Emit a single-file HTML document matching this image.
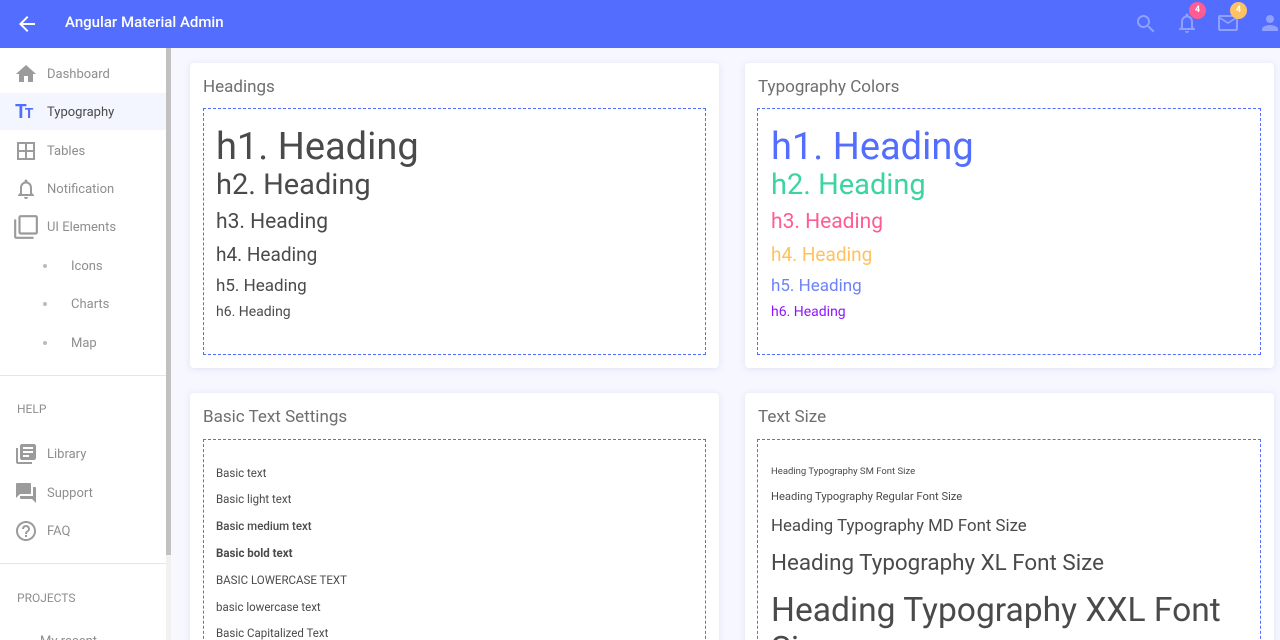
<!DOCTYPE html>
<html style="width:1280px;height:640px;overflow:hidden"><head><meta charset="utf-8"><style>
*{margin:0;padding:0;box-sizing:border-box}
body{width:1280px;height:640px;overflow:hidden;background:#f6f7ff;font-family:"Roboto","Liberation Sans",sans-serif;color:#4a4a4a;position:relative}
.a{position:absolute;white-space:nowrap;line-height:1}
header{position:absolute;left:0;top:0;width:1280px;height:48px;background:#536dfe}
.side{position:absolute;left:0;top:48px;width:166px;height:592px;background:#fff}
.sb{position:absolute;left:166px;top:48px;width:5px;height:507px;background:#c1c1c1}
.sbt{position:absolute;left:166px;top:555px;width:5px;height:85px;background:#f1f1f1}
.card{position:absolute;background:#fff;border-radius:4px;box-shadow:0 1px 6px rgba(200,205,230,.5)}
.box{position:absolute;border:1px dashed #536dfe}
.nav{font-size:13px;color:#8e8e8e}
.ct{font-size:17px;color:#6e6e6e}
.bt{font-size:11.5px;color:#4a4a4a}
.badge{position:absolute;width:17px;height:17px;border-radius:50%;color:#fff;font-size:9px;font-weight:bold;text-align:center;line-height:17px}
</style></head><body>
<header>
<svg class="a" style="left:15px;top:12px" width="24" height="24" viewBox="0 0 24 24"><path d="M20 11H7.83l5.59-5.59L12 4l-8 8 8 8 1.41-1.41L7.83 13H20v-2z" fill="#fff"/></svg>
<div class="a" style="left:65px;top:15px;font-size:15px;color:#fff;font-weight:500">Angular Material Admin</div>
<svg class="a" style="left:1134px;top:12px" width="24" height="24" viewBox="0 0 24 24"><path fill="#8fa0ff" d="M15.5 14h-.79l-.28-.27A6.47 6.47 0 0016 9.5 6.5 6.5 0 109.5 16c1.61 0 3.09-.59 4.23-1.57l.27.28v.79l5 4.99L20.49 19l-4.99-5zm-6 0C7.010 14 5 11.99 5 9.5S7.01 5 9.5 5 14 7.01 14 9.5 11.99 14 9.5 14z"/></svg>
<svg class="a" style="left:1175px;top:11px" width="24" height="24" viewBox="0 0 24 24"><path fill="#8fa0ff" d="M12 22c1.1 0 2-.9 2-2h-4c0 1.1.9 2 2 2zm6-6v-5c0-3.07-1.630-5.64-4.5-6.32V4c0-.83-.67-1.5-1.5-1.5s-1.5.67-1.5 1.5v.68C7.64 5.36 6 7.92 6 11v5l-2 2v1h16v-1l-2-2zm-2 1H8v-6c0-2.48 1.51-4.5 4-4.5s4 2.02 4 4.5v6z"/></svg>
<div class="badge" style="left:1189px;top:2px;background:#ff5c93">4</div>
<svg class="a" style="left:1216px;top:11px" width="24" height="24" viewBox="0 0 24 24"><path fill="#8fa0ff" d="M20 4H4c-1.1 0-2 .9-2 2v12c0 1.1.9 2 2 2h16c1.1 0 2-.9 2-2V6c0-1.1-.9-2-2-2zm0 14H4V8l8 5 8-5v10zm-8-7L4 6h16l-8 5z"/></svg>
<div class="badge" style="left:1230px;top:2px;background:#ffc260">4</div>
<svg class="a" style="left:1258px;top:11px" width="24" height="24" viewBox="0 0 24 24"><path fill="#8fa0ff" d="M12 12c2.21 0 4-1.79 4-4s-1.79-4-4-4-4 1.79-4 4 1.79 4 4 4zm0 2c-2.67 0-8 1.34-8 4v2h16v-2c0-2.66-5.33-4-8-4z"/></svg>
</header>
<div class="side">
<div style="position:absolute;left:0;top:45px;width:166px;height:37px;background:#f3f5ff"></div>
<div style="position:absolute;left:0;top:327px;width:166px;height:1px;background:#e6e6e6"></div>
<div style="position:absolute;left:0;top:515px;width:166px;height:1px;background:#e6e6e6"></div>
</div>
<div class="sb"></div><div class="sbt"></div>
<svg class="a" style="left:14px;top:62px" width="24" height="24" viewBox="0 0 24 24"><path fill="#9b9b9b" d="M10 20v-6h4v6h5v-8h3L12 3 2 12h3v8z"/></svg>
<div class="a nav" style="left:47px;top:68px">Dashboard</div>
<div class="a" style="left:15px;top:102px;font-size:19px;font-weight:bold;color:#536dfe;letter-spacing:-2px">T<span style="font-size:14px">T</span></div>
<div class="a nav" style="left:47px;top:106px;color:#4a4a4a">Typography</div>
<svg class="a" style="left:14px;top:139px" width="24" height="24" viewBox="0 0 24 24"><path fill="#9b9b9b" d="M3 3v18h18V3H3zm8 16H5v-6h6v6zm0-8H5V5h6v6zm8 8h-6v-6h6v6zm0-8h-6V5h6v6z"/></svg>
<div class="a nav" style="left:47px;top:145px">Tables</div>
<svg class="a" style="left:14px;top:177px" width="24" height="24" viewBox="0 0 24 24"><path fill="#9b9b9b" d="M12 22c1.1 0 2-.9 2-2h-4c0 1.1.9 2 2 2zm6-6v-5c0-3.07-1.63-5.64-4.5-6.32V4c0-.83-.67-1.5-1.5-1.5s-1.5.67-1.5 1.5v.68C7.64 5.36 6 7.92 6 11v5l-2 2v1h16v-1l-2-2zm-2 1H8v-6c0-2.48 1.51-4.5 4-4.5s4 2.02 4 4.5v6z"/></svg>
<div class="a nav" style="left:47px;top:183px">Notification</div>
<svg class="a" style="left:13px;top:214px" width="26" height="26" viewBox="0 0 24 24"><path fill="#9b9b9b" d="M3 5H1v16c0 1.1.9 2 2 2h16v-2H3V5zm18-4H7c-1.1 0-2 .9-2 2v14c0 1.1.9 2 2 2h14c1.1 0 2-.9 2-2V3c0-1.1-.9-2-2-2zm0 16H7V3h14v14z"/></svg>
<div class="a nav" style="left:47px;top:221px">UI Elements</div>
<div class="a" style="left:43px;top:264px;width:4px;height:4px;border-radius:50%;background:#bbb"></div>
<div class="a nav" style="left:71px;top:260px">Icons</div>
<div class="a" style="left:43px;top:302px;width:4px;height:4px;border-radius:50%;background:#bbb"></div>
<div class="a nav" style="left:71px;top:298px">Charts</div>
<div class="a" style="left:43px;top:341px;width:4px;height:4px;border-radius:50%;background:#bbb"></div>
<div class="a nav" style="left:71px;top:337px">Map</div>
<div class="a nav" style="left:17px;top:403px;font-size:12px">HELP</div>
<svg class="a" style="left:14px;top:442px" width="24" height="24" viewBox="0 0 24 24"><path fill="#9b9b9b" d="M4 6H2v14c0 1.1.9 2 2 2h14v-2H4V6zm16-4H8c-1.1 0-2 .9-2 2v12c0 1.1.9 2 2 2h12c1.1 0 2-.9 2-2V4c0-1.1-.9-2-2-2zm-1 9H9V9h10v2zm-4 4H9v-2h6v2zm4-8H9V5h10v2z"/></svg>
<div class="a nav" style="left:47px;top:448px">Library</div>
<svg class="a" style="left:14px;top:481px" width="24" height="24" viewBox="0 0 24 24"><path fill="#9b9b9b" d="M21 6h-2v9H6v2c0 .55.45 1 1 1h11l4 4V7c0-.55-.45-1-1-1zm-4 6V3c0-.55-.45-1-1-1H3c-.55 0-1 .45-1 1v14l4-4h10c.55 0 1-.45 1-1z"/></svg>
<div class="a nav" style="left:47px;top:487px">Support</div>
<svg class="a" style="left:14px;top:519px" width="24" height="24" viewBox="0 0 24 24"><path fill="#9b9b9b" d="M11 18h2v-2h-2v2zm1-16C6.48 2 2 6.48 2 12s4.48 10 10 10 10-4.48 10-10S17.52 2 12 2zm0 18c-4.41 0-8-3.59-8-8s3.59-8 8-8 8 3.59 8 8-3.59 8-8 8zm0-14c-2.21 0-4 1.79-4 4h2c0-1.1.9-2 2-2s2 .9 2 2c0 2-3 1.75-3 5h2c0-2.25 3-2.5 3-5 0-2.21-1.79-4-4-4z"/></svg>
<div class="a nav" style="left:47px;top:525px">FAQ</div>
<div class="a nav" style="left:17px;top:592px;font-size:12px">PROJECTS</div>
<div class="a nav" style="left:40px;top:635px">My recent</div>

<div class="card" style="left:190px;top:63px;width:529px;height:305px"></div>
<div class="a ct" style="left:203px;top:79px">Headings</div>
<div class="box" style="left:203px;top:108px;width:503px;height:247px"></div>
<div class="a" style="left:216px;top:128px;font-size:38px">h1. Heading</div>
<div class="a" style="left:216px;top:171px;font-size:29px">h2. Heading</div>
<div class="a" style="left:216px;top:212px;font-size:21px">h3. Heading</div>
<div class="a" style="left:216px;top:245px;font-size:19px">h4. Heading</div>
<div class="a" style="left:216px;top:278px;font-size:17px">h5. Heading</div>
<div class="a" style="left:216px;top:305px;font-size:14px">h6. Heading</div>

<div class="card" style="left:745px;top:63px;width:529px;height:305px"></div>
<div class="a ct" style="left:758px;top:79px">Typography Colors</div>
<div class="box" style="left:757px;top:108px;width:504px;height:247px"></div>
<div class="a" style="left:771px;top:128px;font-size:38px;color:#536dfe">h1. Heading</div>
<div class="a" style="left:771px;top:171px;font-size:29px;color:#3cd4a0">h2. Heading</div>
<div class="a" style="left:771px;top:212px;font-size:21px;color:#ff5c93">h3. Heading</div>
<div class="a" style="left:771px;top:245px;font-size:19px;color:#ffc260">h4. Heading</div>
<div class="a" style="left:771px;top:278px;font-size:17px;color:#6e83f7">h5. Heading</div>
<div class="a" style="left:771px;top:305px;font-size:14px;color:#9013fe">h6. Heading</div>

<div class="card" style="left:190px;top:393px;width:529px;height:247px;border-radius:4px 4px 0 0"></div>
<div class="a ct" style="left:203px;top:409px">Basic Text Settings</div>
<div class="box" style="left:203px;top:439px;width:503px;height:210px"></div>
<div class="a bt" style="left:216px;top:468px">Basic text</div>
<div class="a bt" style="left:216px;top:494px">Basic light text</div>
<div class="a bt" style="left:216px;top:521px;font-weight:500">Basic medium text</div>
<div class="a bt" style="left:216px;top:548px;font-weight:bold">Basic bold text</div>
<div class="a bt" style="left:216px;top:575px">BASIC LOWERCASE TEXT</div>
<div class="a bt" style="left:216px;top:602px">basic lowercase text</div>
<div class="a bt" style="left:216px;top:628px">Basic Capitalized Text</div>

<div class="card" style="left:745px;top:393px;width:529px;height:247px;border-radius:4px 4px 0 0"></div>
<div class="a ct" style="left:758px;top:409px">Text Size</div>
<div class="box" style="left:757px;top:439px;width:504px;height:210px"></div>
<div class="a" style="left:771px;top:467px;font-size:9.5px">Heading Typography SM Font Size</div>
<div class="a" style="left:771px;top:491px;font-size:11.2px">Heading Typography Regular Font Size</div>
<div class="a" style="left:771px;top:518px;font-size:16.8px">Heading Typography MD Font Size</div>
<div class="a" style="left:771px;top:552px;font-size:22.4px">Heading Typography XL Font Size</div>
<div class="a" style="left:771px;top:594px;font-size:33.6px">Heading Typography XXL Font</div>
<div class="a" style="left:771px;top:633px;font-size:33.6px">Size</div>
</body></html>
